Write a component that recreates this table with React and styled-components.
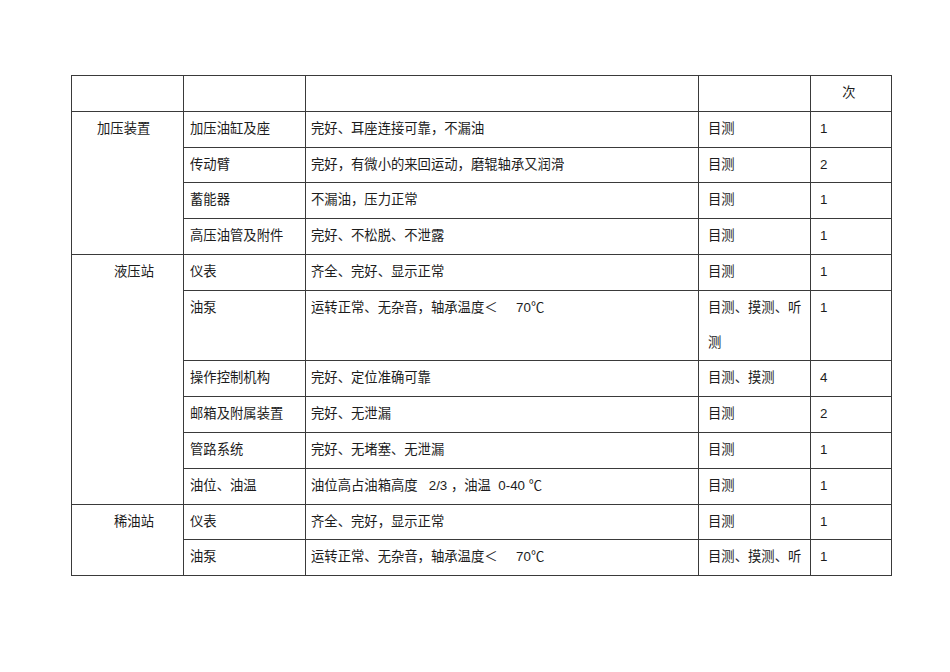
import React from "react";
import styled, { createGlobalStyle } from "styled-components";

const Global = createGlobalStyle`
  html, body {
    margin: 0;
    padding: 0;
    background: #ffffff;
  }
  body {
    font-family: "Liberation Sans", "Noto Sans CJK SC", sans-serif;
    color: #1c1c1c;
  }
`;

const Page = styled.div`
  width: 950px;
  height: 672px;
  box-sizing: border-box;
  padding: 75px 0 0 71px;
  overflow: hidden;
`;

const Table = styled.table`
  border-collapse: collapse;
  table-layout: fixed;
  width: 820px;
  font-size: 13.33px;
  line-height: 34.8px;
`;

const Cell = styled.td`
  border: 1px solid #3a3a3a;
  padding: 0 4px 0 ${(p) => p.$pad}px;
  vertical-align: top;
  text-align: ${(p) => (p.$center ? "center" : "left")};
  white-space: ${(p) => (p.$nowrap ? "nowrap" : "normal")};
  overflow: hidden;
`;

const GroupCell = styled.td`
  border: 1px solid #3a3a3a;
  padding: 0 0 0 ${(p) => p.$indent}px;
  vertical-align: top;
`;

const widths = [112, 122, 393, 112, 81];
const pads = [0, 6, 5, 9, 9];

const groups = [
  {
    name: "加压装置",
    indent: 25,
    rows: [
      ["加压油缸及座", "完好、耳座连接可靠，不漏油", "目测", "1"],
      ["传动臂", "完好，有微小的来回运动，磨辊轴承又润滑", "目测", "2"],
      ["蓄能器", "不漏油，压力正常", "目测", "1"],
      ["高压油管及附件", "完好、不松脱、不泄露", "目测", "1"],
    ],
  },
  {
    name: "液压站",
    indent: 42,
    rows: [
      ["仪表", "齐全、完好、显示正常", "目测", "1"],
      [
        "油泵",
        "运转正常、无杂音，轴承温度＜\u00a0\u00a0\u00a0\u00a0\u00a070℃",
        "目测、摸测、听测",
        "1",
      ],
      ["操作控制机构", "完好、定位准确可靠", "目测、摸测", "4"],
      ["邮箱及附属装置", "完好、无泄漏", "目测", "2"],
      ["管路系统", "完好、无堵塞、无泄漏", "目测", "1"],
      [
        "油位、油温",
        "油位高占油箱高度\u00a0\u00a0\u00a02/3\u00a0，油温\u00a0\u00a00-40 ℃",
        "目测",
        "1",
      ],
    ],
  },
  {
    name: "稀油站",
    indent: 42,
    rows: [
      ["仪表", "齐全、完好，显示正常", "目测", "1"],
      [
        "油泵",
        "运转正常、无杂音，轴承温度＜\u00a0\u00a0\u00a0\u00a0\u00a070℃",
        "目测、摸测、听",
        "1",
      ],
    ],
  },
];

export default function App() {
  return (
    <>
      <Global />
      <Page>
        <Table>
          <colgroup>
            {widths.map((w, i) => (
              <col key={i} style={{ width: w }} />
            ))}
          </colgroup>
          <tbody>
            <tr>
              <Cell $pad={0} />
              <Cell $pad={0} />
              <Cell $pad={0} />
              <Cell $pad={0} />
              <Cell $pad={0} $center>
                次
              </Cell>
            </tr>
            {groups.map((g) =>
              g.rows.map((r, ri) => (
                <tr key={g.name + ri}>
                  {ri === 0 && (
                    <GroupCell rowSpan={g.rows.length} $indent={g.indent}>
                      {g.name}
                    </GroupCell>
                  )}
                  {r.map((c, ci) => (
                    <Cell key={ci} $pad={pads[ci + 1]} $nowrap={ci === 1}>
                      {c}
                    </Cell>
                  ))}
                </tr>
              ))
            )}
          </tbody>
        </Table>
      </Page>
    </>
  );
}
